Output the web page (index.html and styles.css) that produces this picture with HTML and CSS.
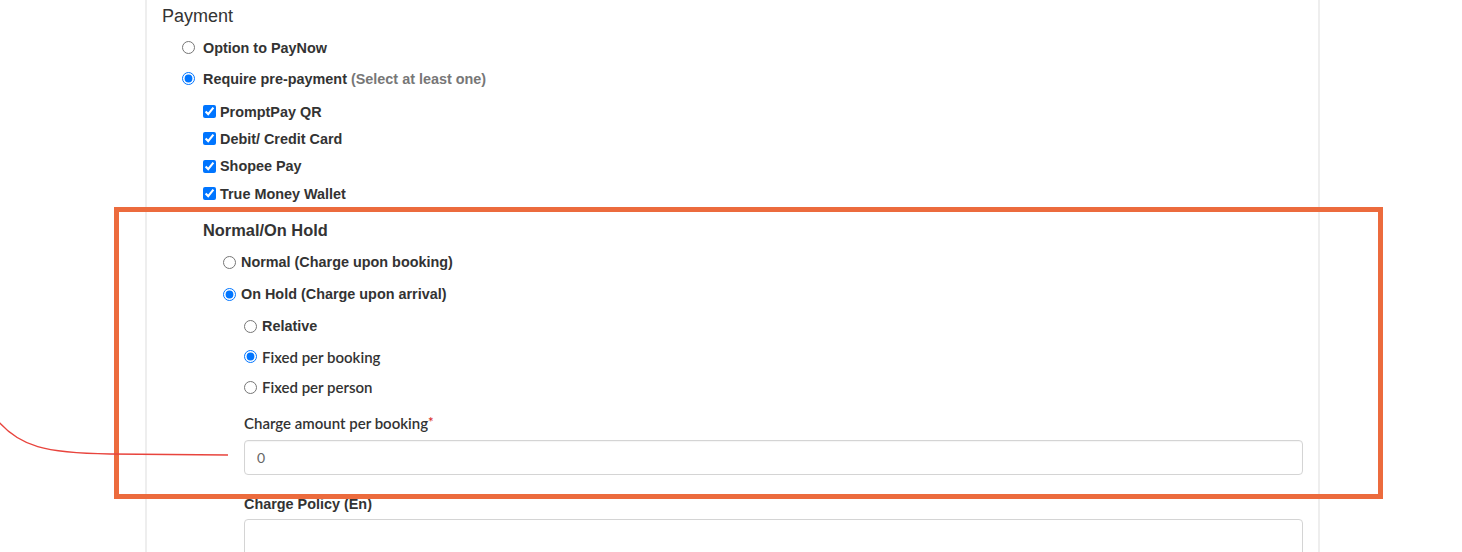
FILE: index.html
```html
<!DOCTYPE html>
<html>
<head>
<meta charset="utf-8">
<link rel="stylesheet" href="styles.css">
</head>
<body>
<div class="page">
  <div class="card">
    <h3 class="section-title">Payment</h3>
    <div class="lvl1">
      <label class="row row-31"><input type="radio" name="pay"><span>Option to PayNow</span></label>
      <label class="row row-31"><input type="radio" name="pay" checked><span>Require pre-payment <span class="muted">(Select at least one)</span></span></label>
    </div>
    <div class="lvl-checks">
      <label class="row row-27 check"><input type="checkbox" checked><span>PromptPay QR</span></label>
      <label class="row row-27 check"><input type="checkbox" checked><span>Debit/ Credit Card</span></label>
      <label class="row row-27 check"><input type="checkbox" checked><span>Shopee Pay</span></label>
      <label class="row row-27 check"><input type="checkbox" checked><span>True Money Wallet</span></label>
    </div>
    <div class="hold">
      <div class="hold-title">Normal/On Hold</div>
      <div class="lvl2">
        <label class="row row-32 tight"><input type="radio" name="hold"><span>Normal (Charge upon booking)</span></label>
        <label class="row row-32 tight"><input type="radio" name="hold" checked><span>On Hold (Charge upon arrival)</span></label>
      </div>
      <div class="lvl3">
        <label class="row row-30 tight"><input type="radio" name="mode"><span>Relative</span></label>
        <label class="row row-30 tight lato"><input type="radio" name="mode" checked><span>Fixed per booking</span></label>
        <label class="row row-30 tight lato"><input type="radio" name="mode"><span>Fixed per person</span></label>
        <div class="field">
          <div class="field-label lato">Charge amount per booking<span class="req">*</span></div>
          <div class="text-input">0</div>
        </div>
        <div class="field field-2">
          <div class="field-label">Charge Policy (En)</div>
          <div class="text-area"></div>
        </div>
      </div>
    </div>
  </div>

  <div class="highlight"></div>
  <svg class="pointer" width="1462" height="552" viewBox="0 0 1462 552">
    <path d="M-6 416 C 18 448, 48 453, 110 454 L 228 455" fill="none" stroke="#e8443d" stroke-width="1.4"/>
  </svg>
</div>
</body>
</html>
```

FILE: styles.css
```css
* { box-sizing: border-box; }

html, body {
  margin: 0;
  padding: 0;
  background: #fff;
}

body {
  font-family: "Liberation Sans", Arial, sans-serif;
  color: #333;
  font-size: 14px;
}

.page {
  position: relative;
  width: 1462px;
  height: 552px;
  overflow: hidden;
}

.card {
  margin-left: 145px;
  width: 1175px;
  height: 552px;
  border-left: 2px solid #eeeeee;
  border-right: 2px solid #eeeeee;
  padding: 0 15px;
}

.section-title {
  margin: 0;
  height: 32px;
  line-height: 32px;
  font-size: 18px;
  font-weight: normal;
  color: #333;
}

.row {
  display: flex;
  align-items: center;
  font-weight: bold;
  font-size: 14.4px;
  color: #333;
}

.row input {
  margin: 0;
  width: 13px;
  height: 13px;
  flex: none;
}

.row-31 { height: 31px; }
.row-27 { height: 27.3px; }
.row-32 { height: 32px; }
.row-30 { height: 30.5px; }

.lvl1 { padding-left: 20px; }
.lvl1 .row { gap: 8px; }

.muted { color: #777; }

.lvl-checks {
  padding-left: 41px;
  margin-top: 4px;
}
.lvl-checks .row { gap: 4px; }

.hold {
  padding-left: 41px;
}

.hold-title {
  margin-top: 8px;
  height: 30px;
  line-height: 30px;
  font-size: 16.4px;
  font-weight: bold;
  color: #333;
}

.lvl2 {
  padding-left: 20px;
  margin-top: 1px;
}

.tight { gap: 5px; }

.lvl3 {
  padding-left: 41px;
  padding-top: 1px;
}

.lato {
  font-family: Lato, "Liberation Sans", sans-serif;
  font-size: 15px;
  font-weight: 600;
}

.field {
  margin-top: 12px;
}

.field-label {
  font-size: 14.4px;
  font-weight: bold;
  line-height: 17px;
  height: 17px;
  color: #333;
}

.field-label.lato {
  font-size: 15px;
  font-weight: 600;
}

.req {
  color: #d9302c;
  font-size: 13px;
  vertical-align: top;
  position: relative;
  top: -1px;
}

.text-input {
  margin-top: 8px;
  height: 35px;
  border: 1px solid #d4d4d4;
  border-radius: 4px;
  padding: 0 12px;
  line-height: 33px;
  font-family: Lato, "Liberation Sans", sans-serif;
  font-size: 14px;
  color: #666;
  box-shadow: inset 0 1px 1px rgba(0,0,0,0.04);
}

.field-2 {
  margin-top: 21px;
}

.text-area {
  margin-top: 6px;
  height: 60px;
  border: 1px solid #d4d4d4;
  border-radius: 4px;
}

.highlight {
  position: absolute;
  left: 114px;
  top: 207px;
  width: 1269px;
  height: 292px;
  border: 5px solid #ec6b3d;
  pointer-events: none;
}

.pointer {
  position: absolute;
  left: 0;
  top: 0;
  pointer-events: none;
}
```
